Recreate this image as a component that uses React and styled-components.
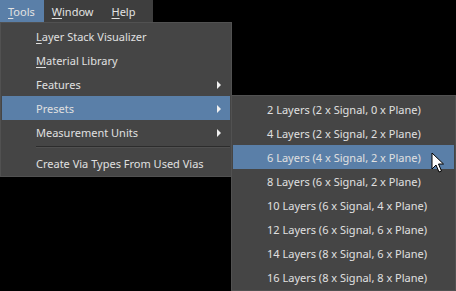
import React from 'react';
import styled, { createGlobalStyle } from 'styled-components';

const GlobalStyle = createGlobalStyle`
  html, body {
    margin: 0;
    padding: 0;
    background: #000;
  }
  body {
    font-family: "Noto Sans", "Open Sans", sans-serif;
    font-size: 11px;
    color: #dcdcdc;
  }
`;

const Page = styled.div`
  position: relative;
  width: 456px;
  height: 291px;
  overflow: hidden;
  background: #000;
`;

const MenuBar = styled.div`
  display: inline-flex;
  height: 23px;
  width: 153px;
  background: #3e3e3e;
`;

const BarItem = styled.div`
  display: flex;
  align-items: center;
  padding: 0 ${(p) => p.$pad}px 0 8px;
  height: 22px;
  background: ${(p) => (p.$open ? '#5a7fa8' : 'transparent')};
  color: #e2e2e2;
`;

const Key = styled.span`
  text-decoration: underline;
  text-underline-offset: 2px;
`;

const Menu = styled.div`
  position: absolute;
  left: ${(p) => p.$left}px;
  top: ${(p) => p.$top}px;
  width: ${(p) => p.$width}px;
  padding: 1px 1px;
  background: #454545;
  border: 1px solid #515151;
  box-sizing: border-box;
  display: flex;
  flex-direction: column;
`;

const Item = styled.div`
  position: relative;
  display: flex;
  align-items: center;
  height: 24px;
  padding-left: ${(p) => p.$indent}px;
  background: ${(p) => (p.$active ? '#5a7fa8' : 'transparent')};
  color: #e0e0e0;
  white-space: nowrap;
`;

const Arrow = styled.span`
  position: absolute;
  right: 9px;
  top: 9px;
  width: 0;
  height: 0;
  border-top: 4px solid transparent;
  border-bottom: 4px solid transparent;
  border-left: 4px solid #f0f0f0;
`;

const Separator = styled.div`
  height: 1px;
  margin: 2px 0 3px 34px;
  background: #2c2c2c;
  border-bottom: 1px solid #505050;
`;

const Cursor = styled.svg`
  position: absolute;
  left: 431px;
  top: 152px;
`;

const presets = [
  '2 Layers (2 x Signal, 0 x Plane)',
  '4 Layers (2 x Signal, 2 x Plane)',
  '6 Layers (4 x Signal, 2 x Plane)',
  '8 Layers (6 x Signal, 2 x Plane)',
  '10 Layers (6 x Signal, 4 x Plane)',
  '12 Layers (6 x Signal, 6 x Plane)',
  '14 Layers (8 x Signal, 6 x Plane)',
  '16 Layers (8 x Signal, 8 x Plane)',
];

export default function App() {
  return (
    <Page>
      <GlobalStyle />
      <MenuBar>
        <BarItem $open $pad={9}><span><Key>T</Key>ools</span></BarItem>
        <BarItem $pad={10}><span><Key>W</Key>indow</span></BarItem>
        <BarItem $pad={8}><span><Key>H</Key>elp</span></BarItem>
      </MenuBar>

      <Menu $left={0} $top={22} $width={232}>
        <Item $indent={34}><span><Key>L</Key>ayer Stack Visualizer</span></Item>
        <Item $indent={34}><span><Key>M</Key>aterial Library</span></Item>
        <Item $indent={34}>Features<Arrow /></Item>
        <Item $indent={34} $active>Presets<Arrow /></Item>
        <Item $indent={34}>Measurement Units<Arrow /></Item>
        <Separator />
        <Item $indent={34}>Create Via Types From Used Vias</Item>
      </Menu>

      <Menu $left={231} $top={95} $width={225}>
        {presets.map((p, i) => (
          <Item key={p} $indent={34} $active={i === 2}>{p}</Item>
        ))}
      </Menu>

      <Cursor width="14" height="22" viewBox="0 0 14 22">
        <path d="M1 1 L1 17 L5 13 L8 20 L10.5 19 L7.5 12 L12.5 12 Z" fill="#fff" stroke="#000" strokeWidth="1" strokeLinejoin="round" />
      </Cursor>
    </Page>
  );
}
